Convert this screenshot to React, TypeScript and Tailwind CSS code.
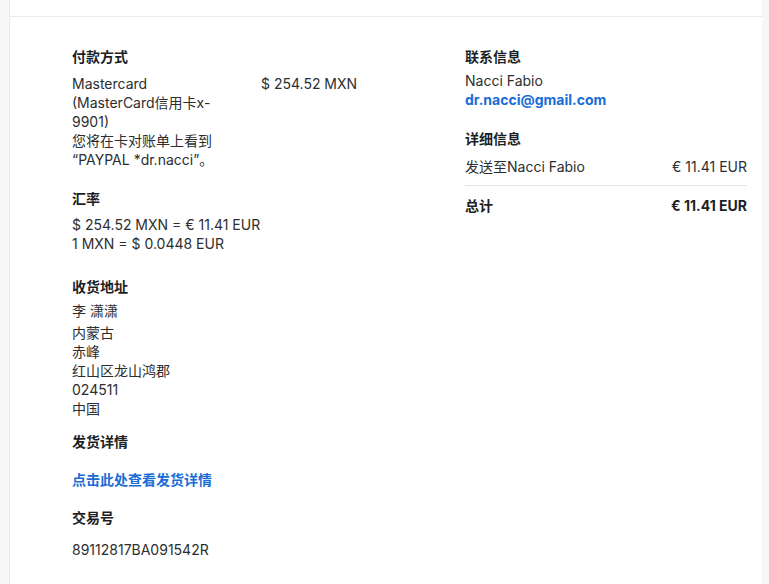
import React from 'react';

const font = { fontFamily: 'Inter, "Noto Sans CJK SC", sans-serif' };

const Heading: React.FC<{ children: React.ReactNode; className?: string }> = ({ children, className = '' }) => (
  <h3 className={`text-[14px] leading-[19px] font-bold text-[#1c1f26] ${className}`}>{children}</h3>
);

export default function App() {
  return (
    <div className="min-h-screen bg-[#f7f7f7] pl-[9px] pr-[7px]" style={font}>
      <div className="min-h-[584px] bg-white border-l border-[#ececec]">
        <div className="h-[17px] border-b border-[#ececec]" />
        <div className="grid grid-cols-[393px_282px] pl-[62px] pt-[30px] pb-[20px] text-[14px] leading-[19px] text-[#2c2e2f]">
          {/* 左侧 */}
          <div>
            <Heading>付款方式</Heading>
            <div className="mt-[8px] grid grid-cols-[150px_auto] gap-x-[39px]">
              <p className="whitespace-nowrap">
                Mastercard
                <br />
                (MasterCard信用卡x-
                <br />
                9901)
                <br />
                您将在卡对账单上看到
                <br />
                “PAYPAL *dr.nacci”。
              </p>
              <p>$ 254.52 MXN</p>
            </div>

            <Heading className="mt-[20px]">汇率</Heading>
            <p className="mt-[7px]">
              $ 254.52 MXN = € 11.41 EUR
              <br />1 MXN = $ 0.0448 EUR
            </p>

            <Heading className="mt-[24px]">收货地址</Heading>
            <p className="mt-[5px]">李 潇潇</p>
            <p className="mt-[3px]">
              内蒙古
              <br />
              赤峰
              <br />
              红山区龙山鸿郡
              <br />
              024511
              <br />
              中国
            </p>

            <Heading className="mt-[14px]">发货详情</Heading>
            <a href="#" className="block mt-[19px] font-bold text-[#1a6dd6]">
              点击此处查看发货详情
            </a>

            <Heading className="mt-[19px]">交易号</Heading>
            <p className="mt-[13px]">89112817BA091542R</p>
          </div>

          {/* 右侧 */}
          <div>
            <Heading>联系信息</Heading>
            <p className="mt-[5px]">Nacci Fabio</p>
            <a href="#" className="block font-bold text-[#1a6dd6]">
              dr.nacci@gmail.com
            </a>

            <Heading className="mt-[20px]">详细信息</Heading>
            <div className="mt-[9px] flex justify-between pb-[9px] border-b border-[#e6e6e6]">
              <span>发送至Nacci Fabio</span>
              <span>€ 11.41 EUR</span>
            </div>
            <div className="flex justify-between pt-[10px] font-bold text-[#1c1f26]">
              <span>总计</span>
              <span>€ 11.41 EUR</span>
            </div>
          </div>
        </div>
      </div>
    </div>
  );
}
